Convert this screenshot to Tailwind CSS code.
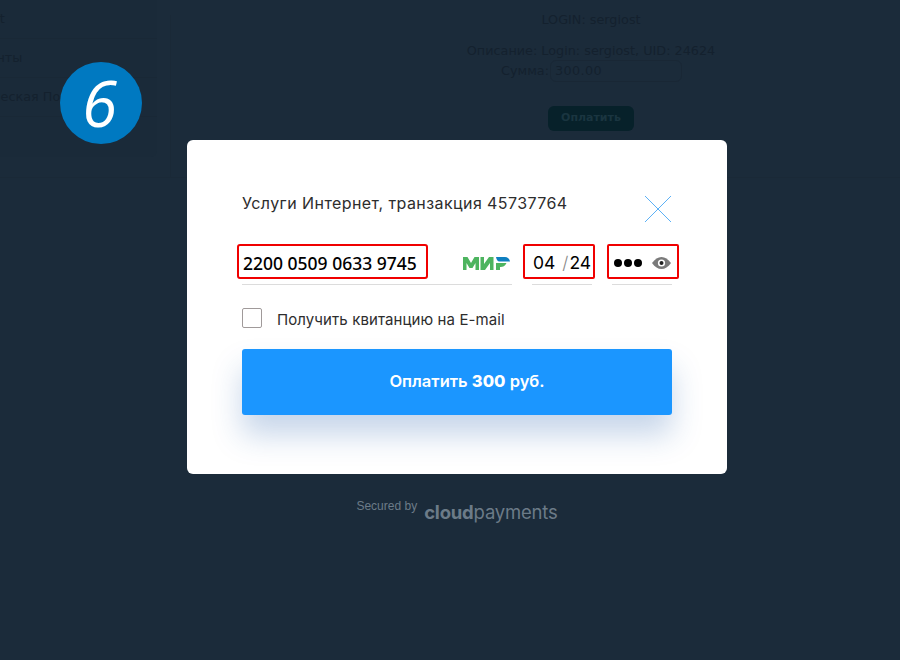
<!DOCTYPE html>
<html lang="ru">
<head>
  <meta charset="UTF-8">
  <title>Оплата</title>
  <script src="https://cdn.jsdelivr.net/npm/@tailwindcss/browser@4"></script>
</head>
<body class="relative h-[660px] w-[900px] overflow-hidden bg-[#1b2b3a]">
  <!-- Страница под затемнением -->
  <div class="flex h-[178px] border-b border-[#1a2937] font-['DejaVu_Sans',sans-serif] text-[12.8px] text-[#14212e]">
    <div class="flex h-[157px] w-[157px] flex-col overflow-hidden rounded-br-md bg-[#1a2a39]">
      <div class="flex h-[39px] items-center border-b border-[#192836]"><span class="-ml-[46px]">Internet</span></div>
      <div class="flex h-[39px] items-center border-b border-[#192836]"><span class="-ml-[37px]">Клиенты</span></div>
      <div class="flex h-[39px] items-center border-b border-[#192836] whitespace-nowrap"><span class="-ml-[47px]">Техническая Поддержка</span></div>
    </div>
    <div class="ml-[13px] mt-[15px] flex flex-1 flex-col items-center border-l border-[#1a2937] pl-[111px]">
      <div class="-mt-[3px] h-4 leading-4">LOGIN: sergiost</div>
      <div class="mt-[15px] h-4 leading-4">Описание: Login: sergiost, UID: 24624</div>
      <div class="mt-[1px] flex items-center gap-[1px] pl-[1px]">
        <span>Сумма:</span>
        <span class="flex h-[22px] w-[132px] items-center rounded-md border border-[#192735] pl-1 tracking-[0.4px]">300.00</span>
      </div>
      <div class="mt-[24px] flex h-[25px] w-[86px] items-center justify-center rounded-md bg-[#07212a] text-[11px] font-bold text-[#1a3540]">Оплатить</div>
    </div>
  </div>

  <!-- Модальное окно -->
  <div class="absolute inset-0 flex flex-col items-center pl-[14px] pt-[140px]">
    <div class="h-[334px] w-[540px] rounded-md bg-white pl-[50px] pr-[48px] pt-[52px] font-['Inter',sans-serif] text-[#2d2d2d]">
      <div class="flex h-[30px] items-start justify-between pl-[5px]">
        <span class="text-[16px] leading-[22px] tracking-[0.42px]">Услуги Интернет, транзакция 45737764</span>
        <svg class="mr-[8px] mt-[4px]" width="26" height="26" viewBox="0 0 26 26" fill="none" stroke="#4aa8f5" stroke-width="0.9"><path d="M0 0 26 26M26 0 0 26"/></svg>
      </div>
      <div class="mt-[22px] flex items-start">
        <div class="w-[275px]">
          <div class="flex h-[35px] items-center justify-between">
            <span class="flex h-[35px] w-[191px] items-center rounded-[3px] border-2 border-[#f00000] pl-1 pt-[3px] font-['Noto_Sans',sans-serif] text-[17.5px] font-medium text-black">2200 0509 0633 9745</span>
            <svg class="mr-[2px] mt-[3px]" width="47" height="14" viewBox="0 0 47 14">
              <path fill="#4db45f" d="M0 1h4.500L8 7l3.500-6H16v13h-3.500V7L9.500 12h-3L3.500 7v7H0zM17.500 1H21v7l5-7h4.500v13H27V7l-5 7h-4.500zM33 7h10.500C42 10 40 11 37.500 11H37v3h-4z"/>
              <path fill="#0f7fc0" d="M33 1h9c2.500 0 4.500 1.500 5 4.500H36.500C34.500 5.500 33.500 3.500 33 1z"/>
            </svg>
          </div>
          <div class="ml-[5px] mt-[5px] h-px bg-[#dcdcdc]"></div>
        </div>
        <div class="ml-[11px] w-[72px]">
          <div class="flex h-[35px] items-center rounded-[2px] border-2 border-[#f00000] pl-[8px] pt-[4px] text-[17.5px] text-black">
            <span>04</span><span class="ml-[7px] mr-px font-light text-[#888]">/</span><span>24</span>
          </div>
          <div class="ml-[9px] mr-[3px] mt-[5px] h-px bg-[#dcdcdc]"></div>
        </div>
        <div class="ml-[12px] w-[72px]">
          <div class="flex h-[35px] items-center justify-between rounded-[2px] border-2 border-[#f00000] pl-[5px] pr-[6px] pt-[3px]">
            <span class="flex gap-[2px]"><i class="size-[8px] rounded-full bg-black"></i><i class="size-[8px] rounded-full bg-black"></i><i class="size-[8px] rounded-full bg-black"></i></span>
            <svg width="19" height="12" viewBox="0 0 19 12"><path fill="#7a7a7a" d="M0 6C3 2 6 0 9.500 0S16 2 19 6c-3 4-6 6-9.500 6S3 10 0 6z"/><circle cx="9.500" cy="6" r="3.600" fill="#fff"/><circle cx="9.500" cy="6" r="2" fill="#222"/></svg>
          </div>
          <div class="ml-[5px] mr-[7px] mt-[5px] h-px bg-[#dcdcdc]"></div>
        </div>
      </div>
      <div class="ml-[5px] mt-[23px] flex h-5 items-center">
        <span class="size-5 rounded-[2px] border border-[#a09a9a]"></span>
        <span class="ml-[15px] pt-[4px] text-[15px] tracking-[0.1px]">Получить квитанцию на E-mail</span>
      </div>
      <div class="ml-[5px] mt-[21px] flex h-[66px] w-[430px] items-center justify-center rounded-[3px] bg-[#1b96ff] pb-px pl-5 text-[16.5px] font-semibold text-white shadow-[0_20px_30px_rgba(30,90,170,0.25)]"><span>Оплатить <b class="font-extrabold">300</b> руб.</span></div>
    </div>
    <div class="mt-[20px] flex h-8 items-start font-['Liberation_Sans',sans-serif] text-[#6c7b88]">
      <span class="mt-[4px] text-xs">Secured by</span>
      <span class="ml-[7px] mt-[6px] font-['Inter',sans-serif] text-[18.5px] leading-[24px] tracking-[-0.2px]"><b class="font-bold">cloud</b>payments</span>
    </div>
  </div>

  <!-- Номер шага -->
  <div class="absolute left-[60px] top-[62px] flex size-[82px] items-center justify-center rounded-full bg-[#0079c1] pr-[3px] font-['Open_Sans',sans-serif] text-[64px] font-normal italic text-white">6</div>
</body>
</html>
